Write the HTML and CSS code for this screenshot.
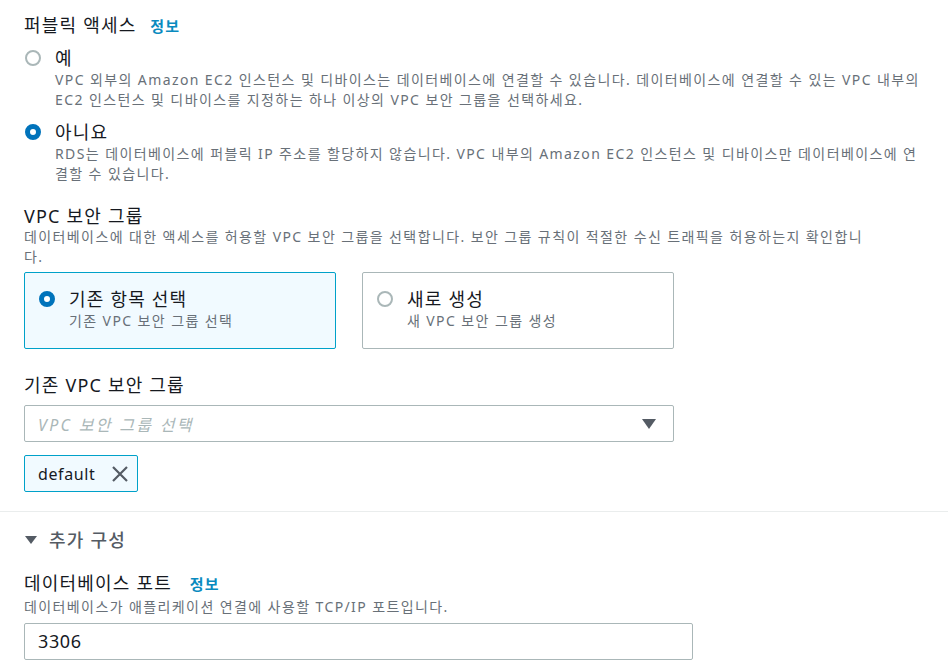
FILE: index.html
```html
<!DOCTYPE html>
<html lang="ko">
<head>
<meta charset="utf-8">
<link rel="stylesheet" href="styles.css">
</head>
<body>
<div class="page">
  <section class="field">
    <div class="label">퍼블릭 액세스 <a class="info">정보</a></div>
    <div class="radio-row">
      <span class="radio"></span>
      <div class="radio-text">
        <div class="radio-title">예</div>
        <div class="desc">VPC 외부의 Amazon EC2 인스턴스 및 디바이스는 데이터베이스에 연결할 수 있습니다. 데이터베이스에 연결할 수 있는 VPC 내부의<br>EC2 인스턴스 및 디바이스를 지정하는 하나 이상의 VPC 보안 그룹을 선택하세요.</div>
      </div>
    </div>
    <div class="radio-row">
      <span class="radio checked"></span>
      <div class="radio-text">
        <div class="radio-title">아니요</div>
        <div class="desc">RDS는 데이터베이스에 퍼블릭 IP 주소를 할당하지 않습니다. VPC 내부의 Amazon EC2 인스턴스 및 디바이스만 데이터베이스에 연<br>결할 수 있습니다.</div>
      </div>
    </div>
  </section>

  <section class="field vpc">
    <div class="label">VPC 보안 그룹</div>
    <div class="desc">데이터베이스에 대한 액세스를 허용할 VPC 보안 그룹을 선택합니다. 보안 그룹 규칙이 적절한 수신 트래픽을 허용하는지 확인합니<br>다.</div>
    <div class="cards">
      <div class="card selected">
        <span class="radio checked"></span>
        <div>
          <div class="card-title">기존 항목 선택</div>
          <div class="desc">기존 VPC 보안 그룹 선택</div>
        </div>
      </div>
      <div class="card">
        <span class="radio"></span>
        <div>
          <div class="card-title">새로 생성</div>
          <div class="desc">새 VPC 보안 그룹 생성</div>
        </div>
      </div>
    </div>
  </section>

  <section class="field existing">
    <div class="label">기존 VPC 보안 그룹</div>
    <div class="select">
      <span class="placeholder">VPC 보안 그룹 선택</span>
      <span class="caret"></span>
    </div>
    <div class="token">
      <span>default</span>
      <svg class="x" width="18" height="18" viewBox="0 0 18 18"><path d="M2 2 L16 16 M16 2 L2 16" stroke="#545b64" stroke-width="2.2" fill="none"/></svg>
    </div>
  </section>
</div>

<div class="divider"></div>

<div class="page">
  <div class="expander"><span class="caret small"></span>추가 구성</div>
  <section class="field port">
    <div class="label">데이터베이스 포트 <a class="info">정보</a></div>
    <div class="desc">데이터베이스가 애플리케이션 연결에 사용할 TCP/IP 포트입니다.</div>
    <div class="input">3306</div>
  </section>
</div>
</body>
</html>
```
FILE: styles.css
```css
html, body {
  margin: 0;
  padding: 0;
  background: #fff;
}
body {
  font-family: "Noto Sans", "Noto Sans CJK KR", sans-serif;
  color: #16191f;
  font-size: 14px;
}
.page {
  padding-left: 24px;
}
.label {
  font-size: 18px;
  line-height: 22px;
  letter-spacing: 1.2px;
}
.info {
  color: #0a8bbf;
  font-weight: bold;
  font-size: 15px;
  letter-spacing: 1px;
  margin-left: 8px;
}
.port .info {
  margin-left: 12px;
}
.desc {
  color: #687078;
  font-size: 14px;
  line-height: 19.5px;
  letter-spacing: 1.4px;
  white-space: nowrap;
}
.field:first-child {
  padding-top: 14px;
}
.radio-row {
  display: flex;
  gap: 14px;
  margin-top: 10px;
  padding-left: 1px;
}
.radio-row + .radio-row {
  margin-top: 12px;
}
.radio {
  flex: none;
  box-sizing: border-box;
  width: 16px;
  height: 16px;
  border-radius: 50%;
  border: 2px solid #aab7b8;
  background: #fff;
  margin-top: 3px;
}
.radio.checked {
  border: 5px solid #0073bb;
}
.radio-title {
  font-size: 18px;
  line-height: 22px;
  letter-spacing: 1.2px;
}
.radio-title + .desc {
  margin-top: 1px;
}
.vpc {
  margin-top: 22px;
}
.cards {
  display: flex;
  gap: 26px;
  margin-top: 6px;
}
.card {
  box-sizing: border-box;
  width: 312px;
  height: 77px;
  border: 1px solid #aab7b8;
  border-radius: 2px;
  display: flex;
  gap: 14px;
  padding: 14px 0 0 14px;
}
.card.selected {
  border-color: #00a1c9;
  background: #f1faff;
}
.card .radio {
  margin-top: 4px;
}
.card-title {
  font-size: 18px;
  line-height: 24px;
  letter-spacing: 1.2px;
}
.existing {
  margin-top: 25px;
}
.select {
  box-sizing: border-box;
  width: 650px;
  height: 37px;
  margin-top: 9px;
  border: 1px solid #aab7b8;
  border-radius: 2px;
  display: flex;
  align-items: center;
  justify-content: space-between;
  padding: 0 17px 0 13px;
}
.placeholder {
  color: #aab7b8;
  font-style: italic;
  font-size: 16px;
  letter-spacing: 2.3px;
}
.caret {
  width: 0;
  height: 0;
  border-left: 7px solid transparent;
  border-right: 7px solid transparent;
  border-top: 10px solid #545b64;
}
.token {
  box-sizing: border-box;
  width: 114px;
  height: 37px;
  margin-top: 13px;
  border: 1px solid #00a1c9;
  border-radius: 2px;
  background: #f1faff;
  display: flex;
  align-items: center;
  justify-content: space-between;
  padding: 0 8px 0 13px;
  font-size: 16px;
  letter-spacing: 0.6px;
}
.x {
  display: block;
}
.divider {
  margin-top: 19px;
  border-top: 1px solid #eaeded;
}
.expander {
  display: flex;
  align-items: center;
  gap: 12px;
  margin-top: 17px;
  font-size: 18px;
  line-height: 22px;
  letter-spacing: 1.2px;
  color: #545b64;
  font-weight: 500;
  padding-left: 1px;
}
.caret.small {
  border-left-width: 6px;
  border-right-width: 6px;
  border-top-width: 8px;
}
.port {
  margin-top: 21px;
}
.port .desc {
  margin-top: 2px;
}
.input {
  box-sizing: border-box;
  width: 669px;
  height: 37px;
  margin-top: 6px;
  border: 1px solid #aab7b8;
  border-radius: 2px;
  display: flex;
  align-items: center;
  padding-left: 13px;
  font-size: 18px;
  letter-spacing: 0.6px;
}
```
